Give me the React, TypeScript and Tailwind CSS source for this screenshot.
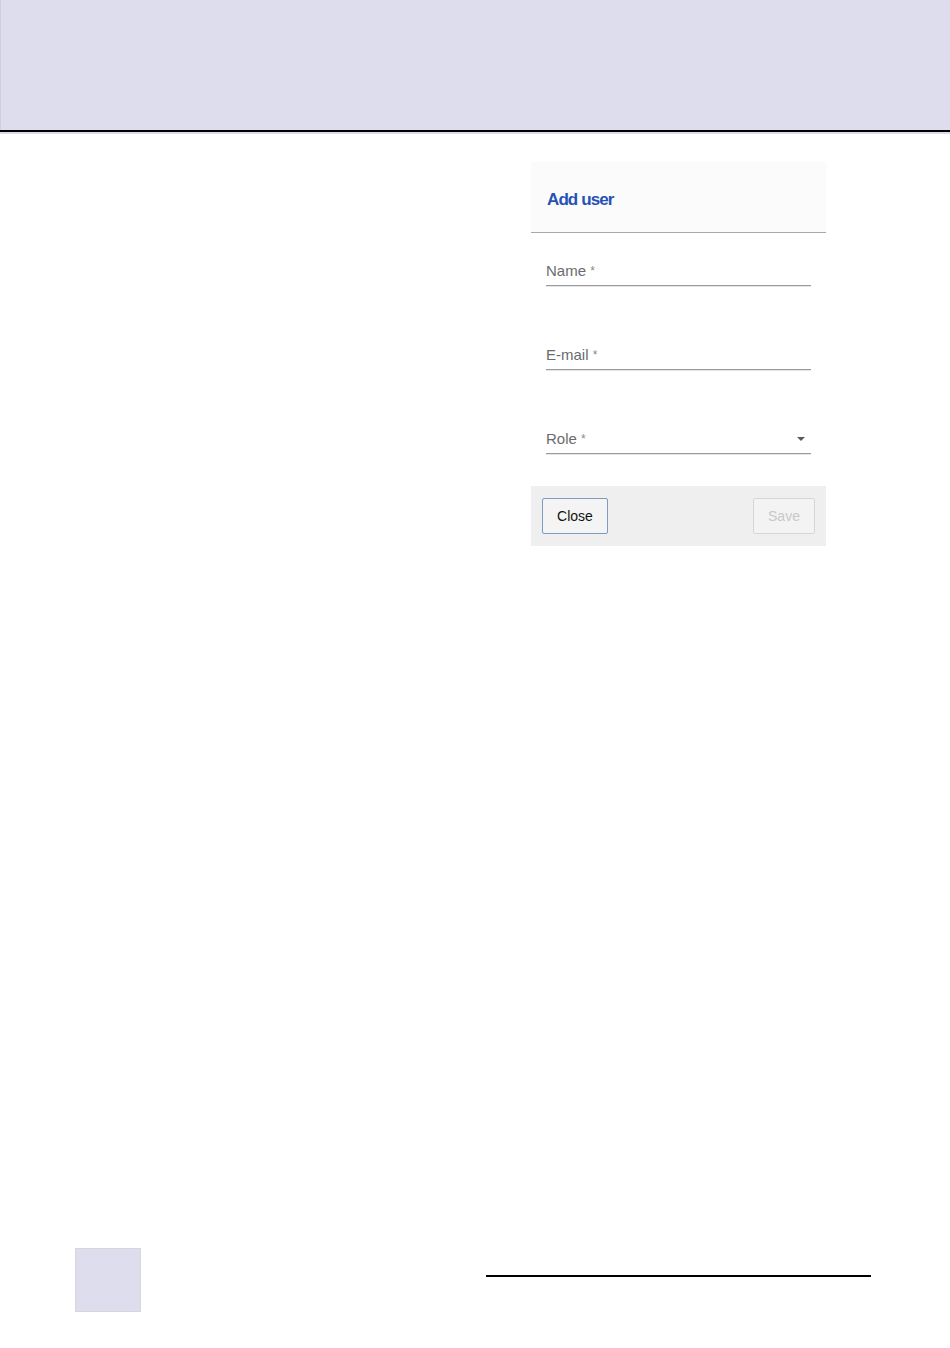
const fieldLabel = "pt-[1px] text-[15px] leading-[20px] text-[#6b6b6b] font-['Liberation_Sans',Arial,sans-serif]";

const Field = ({ label, select }: { label: string; select?: boolean }) => (
  <div className="flex items-center justify-between border-b border-[#9c9c9c] pb-[4px] shadow-[0_1px_0_#e4e4e4]">
    <span className={fieldLabel}>
      {label} <span className="text-[12px] align-top text-[#8a8a8a]">*</span>
    </span>
    {select && (
      <svg width="10" height="6" viewBox="0 0 10 6" className="mr-[5px]">
        <path d="M1 1h8L5 5z" fill="#5a5a5a" />
      </svg>
    )}
  </div>
);

export default function App() {
  return (
    <div className="flex h-[1348px] w-[950px] flex-col bg-white font-['Liberation_Sans',Arial,sans-serif]">
      {/* Top band */}
      <div className="h-[130px] shrink-0 border-l border-[#cfcfd8] bg-[#dedded]" />
      <div className="h-[2px] shrink-0 bg-black" />
      <div className="h-[2px] shrink-0 bg-[#dcdcdc]" />

      {/* Dialog */}
      <div className="pl-[531px] pt-[28px]">
        <div className="w-[295px] bg-white">
          <div className="flex h-[71px] items-center border-b border-[#a9a9a9] bg-[#fbfbfc] px-[16px]">
            <h2 className="pt-[5px] text-[17px] font-bold tracking-[-0.9px] text-[#2652b5] font-['Liberation_Sans',Arial,sans-serif]">
              Add user
            </h2>
          </div>

          <div className="flex flex-col gap-[58px] px-[15px] pb-[32px] pt-[27px]">
            <Field label="Name" />
            <Field label="E-mail" />
            <Field label="Role" select />
          </div>

          <div className="flex h-[60px] items-center justify-between bg-[#efefef] px-[11px]">
            <button className="h-[36px] w-[66px] rounded-[2px] border border-[#7d9cc0] bg-[#f4f4f4] text-[14px] text-[#111]">
              Close
            </button>
            <button className="h-[36px] w-[62px] rounded-[2px] border border-[#d6d6d6] bg-[#f3f3f3] text-[14px] text-[#c9c9c9]">
              Save
            </button>
          </div>
        </div>
      </div>

      <div className="flex-1" />

      {/* Page footer */}
      <div className="flex items-start pb-[36px] pl-[75px]">
        <div className="h-[64px] w-[66px] border border-[#d6d6dc] bg-[#dedded]" />
        <div className="ml-[345px] mt-[27px] h-[2px] w-[385px] bg-black" />
      </div>
    </div>
  );
}
